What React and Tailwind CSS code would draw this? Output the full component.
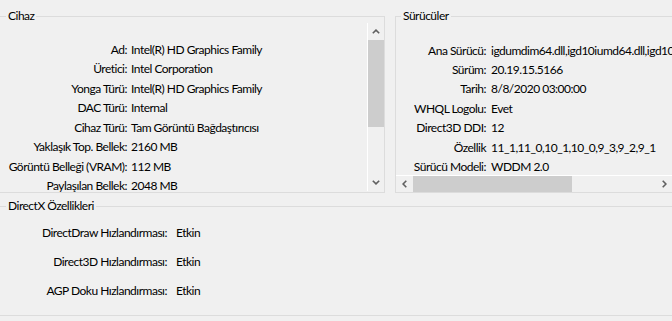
import React from "react";

const font = { fontFamily: "Lato, 'Liberation Sans', sans-serif" };

function ArrowUp() {
  return (
    <svg width="8" height="5" viewBox="0 0 8 5">
      <path d="M0.8 4.3 L4 1.1 L7.2 4.3" stroke="#606060" strokeWidth="1.6" fill="none" />
    </svg>
  );
}
function ArrowDown() {
  return (
    <svg width="8" height="5" viewBox="0 0 8 5">
      <path d="M0.8 0.7 L4 3.9 L7.2 0.7" stroke="#606060" strokeWidth="1.6" fill="none" />
    </svg>
  );
}
function ArrowLeft() {
  return (
    <svg width="5" height="8" viewBox="0 0 5 8">
      <path d="M4.3 0.8 L1.1 4 L4.3 7.2" stroke="#606060" strokeWidth="1.6" fill="none" />
    </svg>
  );
}
function ArrowRight() {
  return (
    <svg width="5" height="8" viewBox="0 0 5 8">
      <path d="M0.7 0.8 L3.9 4 L0.7 7.2" stroke="#606060" strokeWidth="1.6" fill="none" />
    </svg>
  );
}

const cihaz = [
  ["Ad:", "Intel(R) HD Graphics Family"],
  ["Üretici:", "Intel Corporation"],
  ["Yonga Türü:", "Intel(R) HD Graphics Family"],
  ["DAC Türü:", "Internal"],
  ["Cihaz Türü:", "Tam Görüntü Bağdaştırıcısı"],
  ["Yaklaşık Top. Bellek:", "2160 MB"],
  ["Görüntü Belleği (VRAM):", "112 MB"],
  ["Paylaşılan Bellek:", "2048 MB"],
];

const surucu = [
  ["Ana Sürücü:", "igdumdim64.dll,igd10iumd64.dll,igd10iumd64.dll"],
  ["Sürüm:", "20.19.15.5166"],
  ["Tarih:", "8/8/2020 03:00:00"],
  ["WHQL Logolu:", "Evet"],
  ["Direct3D DDI:", "12"],
  ["Özellik", "11_1,11_0,10_1,10_0,9_3,9_2,9_1"],
  ["Sürücü Modeli:", "WDDM 2.0"],
];

const dx = [
  ["DirectDraw Hızlandırması:", "Etkin"],
  ["Direct3D Hızlandırması:", "Etkin"],
  ["AGP Doku Hızlandırması:", "Etkin"],
];

export default function App() {
  return (
    <div
      className="w-[672px] h-[321px] bg-[#f0f0f0] overflow-hidden flex flex-col text-[12px] tracking-[-0.5px] tabular-nums text-black"
      style={font}
    >
      {/* top row */}
      <div className="flex pt-[16px] shrink-0">
        {/* Cihaz group */}
        <div className="relative -ml-[1px] w-[386px] h-[177px] shrink-0 border border-[#dcdcdc] flex">
          <span className="absolute left-[6px] top-[-9px] px-[2px] bg-[#f0f0f0] leading-[16px]">Cihaz</span>
          <div className="flex-1 min-w-0 pt-[23px] overflow-hidden">
            {cihaz.map(([k, v]) => (
              <div key={k} className="flex items-center h-[19.5px] whitespace-nowrap">
                <span className="w-[127px] text-right shrink-0">{k}</span>
                <span className="ml-[4px]">{v}</span>
              </div>
            ))}
          </div>
          <div className="mt-[6px] w-[17px] h-[168px] border-l border-white flex flex-col shrink-0">
            <div className="h-[17px] flex items-center justify-center">
              <ArrowUp />
            </div>
            <div className="h-[87px] bg-[#cdcdcd]" />
            <div className="flex-1" />
            <div className="h-[17px] flex items-center justify-center">
              <ArrowDown />
            </div>
          </div>
        </div>

        {/* Sürücüler group */}
        <div className="relative ml-[10px] w-[279px] h-[177px] shrink-0 border border-[#dcdcdc] flex flex-col">
          <span className="absolute left-[5px] top-[-9px] px-[2px] bg-[#f0f0f0] leading-[16px]">Sürücüler</span>
          <div className="flex-1 min-h-0 pt-[24px] overflow-hidden">
            {surucu.map(([k, v]) => (
              <div key={k} className="flex items-center h-[19.4px] whitespace-nowrap">
                <span className="w-[90px] text-right shrink-0">{k}</span>
                <span className="ml-[5px]">{v}</span>
              </div>
            ))}
          </div>
          <div className="h-[17px] border-t border-white flex shrink-0">
            <div className="w-[17px] flex items-center justify-center">
              <ArrowLeft />
            </div>
            <div className="w-[159px] bg-[#cdcdcd]" />
            <div className="flex-1" />
            <div className="w-[17px] flex items-center justify-center">
              <ArrowRight />
            </div>
          </div>
        </div>
      </div>

      {/* DirectX group */}
      <div className="relative mt-[13px] -mx-[1px] h-[110px] shrink-0 border border-[#dcdcdc] pt-[11px]">
        <span className="absolute left-[6px] top-[-9px] px-[2px] bg-[#f0f0f0] leading-[16px]">DirectX Özellikleri</span>
        {dx.map(([k, v]) => (
          <div key={k} className="flex items-center h-[29px] whitespace-nowrap">
            <span className="w-[167px] text-right shrink-0">{k}</span>
            <span className="ml-[9px]">{v}</span>
          </div>
        ))}
      </div>
    </div>
  );
}
